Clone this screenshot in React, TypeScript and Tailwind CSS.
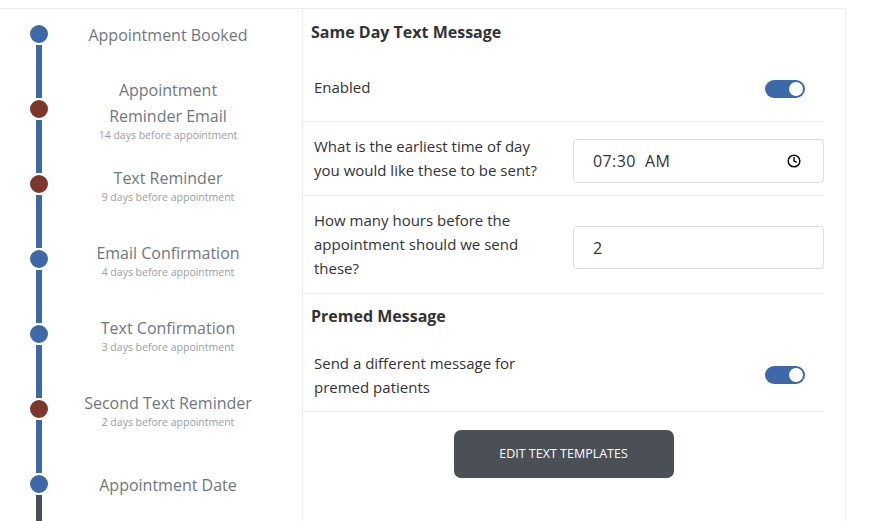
import { Clock } from "lucide-react";

type Step = {
  title: string;
  sub?: string;
  color: "blue" | "red";
};

const steps: Step[] = [
  { title: "Appointment Booked", color: "blue" },
  { title: "Appointment Reminder Email", sub: "14 days before appointment", color: "red" },
  { title: "Text Reminder", sub: "9 days before appointment", color: "red" },
  { title: "Email Confirmation", sub: "4 days before appointment", color: "blue" },
  { title: "Text Confirmation", sub: "3 days before appointment", color: "blue" },
  { title: "Second Text Reminder", sub: "2 days before appointment", color: "red" },
  { title: "Appointment Date", color: "blue" },
];

function Toggle() {
  return (
    <div className="flex h-[18px] w-[40px] items-center justify-end rounded-full bg-[#3d69a8] px-[2px]">
      <div className="h-[14px] w-[14px] rounded-full bg-white" />
    </div>
  );
}

function Timeline() {
  return (
    <div className="flex w-[302px] shrink-0 flex-col pl-[28px]">
      {steps.map((s, i) => {
        const first = i === 0;
        const last = i === steps.length - 1;
        return (
          <div key={s.title} className="flex h-[75px] shrink-0">
            <div className="flex w-[22px] flex-col items-center">
              <div className={`h-[14px] w-[6px] ${first ? "bg-transparent" : "bg-[#3d69a8]"}`} />
              <div
                className={`h-[22px] w-[22px] rounded-full border-2 border-white ${
                  s.color === "blue" ? "bg-[#3d69a8]" : "bg-[#7e352a]"
                }`}
              />
              <div className={`w-[6px] flex-1 ${last ? "bg-[#4b4f56]" : "bg-[#3d69a8]"}`} />
            </div>
            <div className="ml-[33px] flex h-[50px] w-[170px] flex-col items-center justify-center pt-[1px] text-center">
              <div className="text-[16px] leading-[26px] text-[#6f7780]">{s.title}</div>
              {s.sub && <div className="-mt-[1px] text-[10.5px] leading-[14px] text-[#9a9ea3]">{s.sub}</div>}
            </div>
          </div>
        );
      })}
    </div>
  );
}

export default function App() {
  return (
    <div
      className="h-[521px] w-[869px] overflow-hidden bg-white"
      style={{ fontFamily: '"Open Sans", "Noto Sans", sans-serif' }}
    >
      <div className="mt-[8px] flex w-[846px] border-t border-[#ececec]">
        <Timeline />
        <div className="flex min-h-[520px] flex-1 flex-col border-x border-[#ececec] pr-[21px] text-[#333]">
          <div className="pl-[8px] pt-[12px] text-[16px] font-bold leading-[22px]">Same Day Text Message</div>
          <div className="flex h-[79px] items-center justify-between border-b border-[#ececec] pl-[11px] pr-[19px] pt-[12px] text-[15px]">
            <span className="-mt-[1px]">Enabled</span>
            <div className="mt-[1px]">
              <Toggle />
            </div>
          </div>
          <div className="flex h-[74px] items-center justify-between border-b border-[#ececec] pl-[11px] text-[15px] leading-[24px]">
            <span className="-mt-[2px] w-[245px]">What is the earliest time of day you would like these to be sent?</span>
            <div className="mt-[4px] flex h-[44px] w-[251px] items-center justify-between rounded-[4px] border border-[#dedede] pl-[19px] pr-[22px] text-[16px] tracking-[0.4px]">
              <span>07:30&nbsp;&nbsp;AM</span>
              <Clock size={14} strokeWidth={2.5} color="#111" />
            </div>
          </div>
          <div className="flex h-[98px] items-center justify-between border-b border-[#ececec] pl-[11px] text-[15px] leading-[24px]">
            <span className="-mt-[2px] w-[245px]">How many hours before the appointment should we send these?</span>
            <div className="mt-[6px] flex h-[43px] w-[251px] items-center rounded-[4px] border border-[#dedede] pl-[19px] text-[16px]">
              2
            </div>
          </div>
          <div className="pl-[8px] pt-[11px] text-[16px] font-bold leading-[22px]">Premed Message</div>
          <div className="flex h-[85px] items-center justify-between border-b border-[#ececec] pl-[11px] pr-[19px] pt-[12px] text-[15px] leading-[24px]">
            <span className="w-[245px]">Send a different message for premed patients</span>
            <Toggle />
          </div>
          <div className="flex justify-center pt-[18px]">
            <button className="h-[48px] w-[220px] rounded-[7px] bg-[#4b4f56] text-[12.5px] text-white">
              EDIT TEXT TEMPLATES
            </button>
          </div>
        </div>
      </div>
    </div>
  );
}
